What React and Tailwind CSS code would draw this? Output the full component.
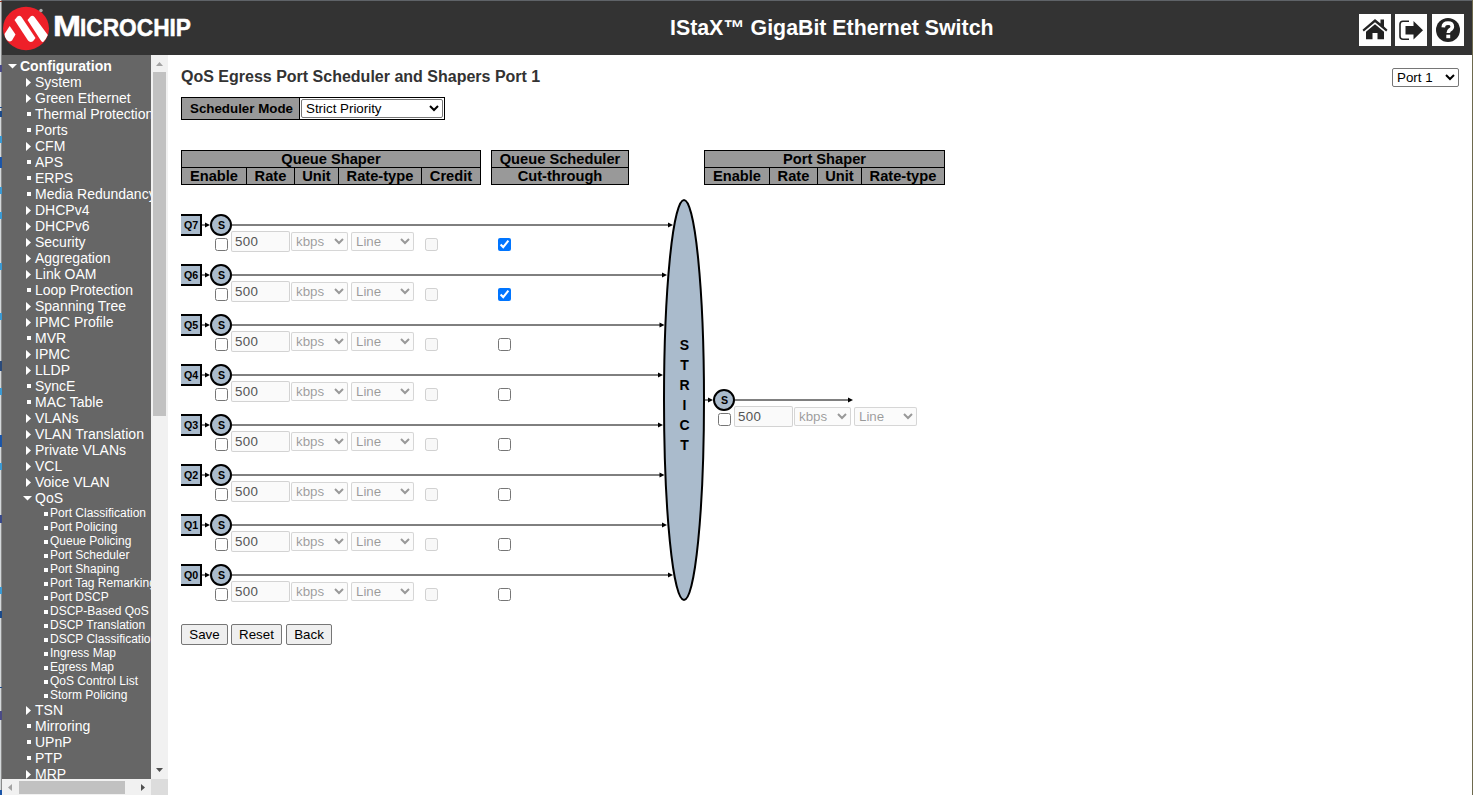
import React from "react";

const NAV = [
  ["r", "System"], ["r", "Green Ethernet"], ["s", "Thermal Protection"], ["s", "Ports"],
  ["r", "CFM"], ["s", "APS"], ["s", "ERPS"], ["s", "Media Redundancy"],
  ["r", "DHCPv4"], ["r", "DHCPv6"], ["r", "Security"], ["r", "Aggregation"],
  ["r", "Link OAM"], ["s", "Loop Protection"], ["r", "Spanning Tree"], ["r", "IPMC Profile"],
  ["s", "MVR"], ["r", "IPMC"], ["r", "LLDP"], ["s", "SyncE"], ["s", "MAC Table"],
  ["r", "VLANs"], ["r", "VLAN Translation"], ["r", "Private VLANs"], ["r", "VCL"],
  ["r", "Voice VLAN"], ["d", "QoS"],
];
const QOS = [
  "Port Classification", "Port Policing", "Queue Policing", "Port Scheduler", "Port Shaping",
  "Port Tag Remarking", "Port DSCP", "DSCP-Based QoS", "DSCP Translation",
  "DSCP Classification", "Ingress Map", "Egress Map", "QoS Control List", "Storm Policing",
];
const NAV_END = [["r", "TSN"], ["s", "Mirroring"], ["s", "UPnP"], ["s", "PTP"], ["r", "MRP"]];

function Marker({ kind }) {
  return (
    <svg width="15" height="16" className="shrink-0" fill="#fff">
      {kind === "r" && <path d="M6 4L11 8.5L6 13Z" />}
      {kind === "d" && <path d="M3 6H12L7.5 10.5Z" />}
      {kind === "s" && <rect x="7" y="6" width="4" height="4" />}
    </svg>
  );
}

function NavItem({ kind, label }) {
  return (
    <div className="flex h-4 items-center whitespace-nowrap pl-[18px] text-[14px] leading-4">
      <Marker kind={kind} />
      <span>{label}</span>
    </div>
  );
}

function Sidebar() {
  return (
    <aside className="flex h-[740px] w-[166px] shrink-0 flex-col">
      <div className="flex h-[724px]">
        <nav className="h-full w-[149px] overflow-hidden bg-[#666] pt-[3px] text-white">
          <div className="flex h-4 items-center pl-[3px] text-[14px] font-bold leading-4">
            <Marker kind="d" />
            <span>Configuration</span>
          </div>
          {NAV.map(([k, l]) => <NavItem key={l} kind={k} label={l} />)}
          {QOS.map((l) => (
            <div key={l} className="flex h-[14px] items-center gap-[2px] whitespace-nowrap pl-[42px] text-[12px] leading-[14px]">
              <span className="mt-[2px] size-1 shrink-0 bg-white" />
              <span>{l}</span>
            </div>
          ))}
          {NAV_END.map(([k, l]) => <NavItem key={l} kind={k} label={l} />)}
        </nav>
        <div className="flex w-[17px] flex-col items-center bg-[#f1f1f1]">
          <svg width="17" height="17"><path d="M5 11H12L8.5 7Z" fill="#a3a3a3" /></svg>
          <div className="h-[344px] w-[13px] bg-[#c1c1c1]" />
          <svg width="17" height="17" className="mt-auto"><path d="M5 6H12L8.5 10Z" fill="#505050" /></svg>
        </div>
      </div>
      <div className="flex h-4">
        <div className="flex w-[149px] items-center bg-[#f1f1f1]">
          <svg width="17" height="16"><path d="M10 5V12L6 8.5Z" fill="#a3a3a3" /></svg>
          <div className="h-[13px] w-[106px] bg-[#c1c1c1]" />
          <svg width="17" height="16" className="ml-auto"><path d="M7 5V12L11 8.5Z" fill="#505050" /></svg>
        </div>
        <div className="w-[17px] bg-[#dcdcdc]" />
      </div>
    </aside>
  );
}

function Logo() {
  return (
    <svg width="200" height="54" viewBox="2 1 200 54">
      <ellipse cx="26" cy="28.5" rx="23" ry="21.7" fill="#ee2029" />
      <path d="M14.500 20L17.500 16.500Q19.500 15 21.500 17L35.500 38L33 41.300Q30 43 28 40.500Z" fill="#fff" />
      <path d="M27.500 20L30.500 16.500Q32.500 15 34.500 17L47.800 35Q46 39.500 43 42.300Q41.500 42 40.500 40Z" fill="#fff" />
      <path d="M9.700 26L15.500 34.500L12 40.500Q9 43 6.500 39.500Q4.500 36.500 4.500 34Z" fill="#fff" />
      <circle cx="41" cy="10.500" r="1.700" fill="#aaa" />
      <g fill="#fff" stroke="#fff" strokeWidth="0.5" strokeLinejoin="round" fontFamily="Liberation Sans, Arial, sans-serif" fontWeight="700">
        <text x="53" y="36" fontSize="30" textLength="28" lengthAdjust="spacingAndGlyphs">M</text>
        <text x="80" y="36" fontSize="24" textLength="111" lengthAdjust="spacingAndGlyphs">ICROCHIP</text>
      </g>
    </svg>
  );
}

function HeaderIcons() {
  return (
    <div className="flex">
      <svg width="32" height="32" className="bg-white" fill="#222">
        <path d="M16 5L21.500 9.500V5.500H25V12.500L28.500 15.800L27.200 17.500L16 8.200L4.800 17.500L3.500 15.800Z" />
        <path d="M16 10.300L25 17.800V25.300H18.500V19H13.500V25.300H7V17.800Z" />
      </svg>
      <svg width="32" height="32" className="ml-1 bg-white">
        <path d="M14 7.300H8Q5 7.300 5 10.300V22.300Q5 25.300 8 25.300H14" fill="none" stroke="#222" strokeWidth="1.600" />
        <path d="M10.500 12H18.500V7L28 16.300L18.500 25.500V20.500H10.500Z" fill="#222" />
      </svg>
      <svg width="32" height="32" className="ml-[5px] bg-white">
        <circle cx="16" cy="16" r="12" fill="#222" />
        <path d="M11.300 13.300Q11.500 9.200 16 9.200Q20.300 9.200 20.300 12.500Q20.300 14.500 18 15.800Q16.300 17 16.300 19" fill="none" stroke="#fff" strokeWidth="3.700" />
        <rect x="14.300" y="20.700" width="3.900" height="3.500" fill="#fff" />
      </svg>
    </div>
  );
}

const TH = "border border-black bg-[#999] p-0 text-center font-bold";

function HeadTable({ title, cols, widths }) {
  return (
    <table className="table-fixed border-collapse text-[14.667px] leading-4 text-black">
      <colgroup>{widths.map((w, i) => <col key={i} style={{ width: w }} />)}</colgroup>
      <tbody>
        <tr className="h-[17px]"><th className={TH} colSpan={cols.length}>{title}</th></tr>
        <tr className="h-[17px]">{cols.map((c) => <th key={c} className={TH}>{c}</th>)}</tr>
      </tbody>
    </table>
  );
}

const DISABLED_SELECT = "h-[19px] rounded-[2px] border border-[#767676]/40 bg-[#efefef]/30 text-[#101010]/60 opacity-70";

function RateControls() {
  return (
    <div className="flex items-start">
      <input type="checkbox" className="mt-[7px] size-[13px]" />
      <input disabled defaultValue="500" className="ml-[3px] h-[21px] w-[59px] rounded-[2px] border border-[#767676]/30 bg-[#efefef]/30 px-[3px] tracking-[0.3px] text-[#545454]" />
      <select disabled className={"ml-[1px] mt-[1px] w-[57px] " + DISABLED_SELECT}><option>kbps</option></select>
      <select disabled className={"ml-[3px] mt-[1px] w-[63px] " + DISABLED_SELECT}><option>Line</option></select>
    </div>
  );
}

const QUEUES = [7, 6, 5, 4, 3, 2, 1, 0];
const TIPS = [673, 667, 664.5, 663, 663, 664.5, 667, 673];

function Arrow({ x1, x2, y }) {
  return (
    <g>
      <line x1={x1} x2={x2 - 3} y1={y} y2={y} stroke="#000" strokeWidth="1" />
      <path d={`M${x2 - 5} ${y - 2.5}L${x2} ${y}L${x2 - 5} ${y + 2.5}Z`} />
    </g>
  );
}

function Diagram() {
  return (
    <svg className="pointer-events-none absolute left-0 top-0" width="700" height="410" viewBox="181 195 700 410" fontFamily="Liberation Sans, Arial, sans-serif" fontWeight="700" textAnchor="middle">
      {QUEUES.map((q, i) => {
        const y = 225 + i * 50;
        return (
          <g key={q}>
            <rect x="171" y={y - 10} width="30" height="20" fill="#abc" stroke="#000" strokeWidth="2" />
            <text x="191" y={y + 4} fontSize="10.667">{"Q" + q}</text>
            <Arrow x1={202} x2={210} y={y} />
            <circle cx="221" cy={y} r="10" fill="#abc" stroke="#000" strokeWidth="2" />
            <text x="221.500" y={y + 4} fontSize="10.667">S</text>
            <Arrow x1={232} x2={TIPS[i]} y={y} />
          </g>
        );
      })}
      <ellipse cx="684" cy="400" rx="20" ry="200" fill="#abc" stroke="#000" strokeWidth="2" />
      {"STRICT".split("").map((c, i) => <text key={i} x="684.500" y={350 + i * 20} fontSize="14">{c}</text>)}
      <Arrow x1={705} x2={713} y={400} />
      <circle cx="724" cy="400" r="10" fill="#abc" stroke="#000" strokeWidth="2" />
      <text x="724.500" y="404" fontSize="10.667">S</text>
      <Arrow x1={735} x2={853} y={400} />
    </svg>
  );
}

const BTN = "h-[21px] rounded-[2px] border border-[#767676] bg-[#efefef] text-center text-black";

// Coloured specks of the window behind, along the left edge: [top, height, colour]
const EDGE = [
  [1, 1, "#8b2c1a"], [65, 7, "#4a4a86"], [107, 1, "#1b4a8a"], [111, 6, "#1b4a8a"], [136, 7, "#3a9ad4"],
  [157, 11, "#1b55a8"], [187, 7, "#3a9ad4"], [212, 7, "#3a9ad4"], [263, 7, "#3a9ad4"], [313, 7, "#3a9ad4"],
  [361, 10, "#2a4a7a"], [388, 7, "#3a9ad4"], [435, 12, "#1b55a8"], [463, 7, "#3a9ad4"], [515, 8, "#3a4a8a"],
  [587, 7, "#3a9ad4"], [611, 7, "#1b4a8a"], [687, 1, "#1b4a8a"], [711, 9, "#4a4a86"], [790, 5, "#1b55a8"],
];

export default function App() {
  return (
    <div className="flex h-[795px] w-[1473px] overflow-hidden bg-white font-['Liberation_Sans',Arial,sans-serif] text-[13.333px] leading-4">
      <div className="relative w-[2px] border-r border-[#8a8a8a] bg-[#d4d8da]">
        {EDGE.map(([t, h, c]) => <i key={t} className="absolute left-0 w-[2px]" style={{ top: t, height: h, background: c }} />)}
      </div>
      <div className="flex w-[1470px] flex-col">
        <header className="flex h-[55px] shrink-0 items-center border-t border-[#5f6368] bg-[#333] pr-2">
          <Logo />
          <h1 className="ml-[468px] whitespace-nowrap text-[21.333px] font-bold text-white">IStaX™ GigaBit Ethernet Switch</h1>
          <div className="ml-auto pt-[3px]"><HeaderIcons /></div>
        </header>
        <div className="flex">
          <Sidebar />
          <main className="flex-1 pl-[13px] pr-[13px]">
            <div className="flex items-start justify-between pt-[13px]">
              <h2 className="pt-px text-[16px] font-bold leading-4 text-[#333]">QoS Egress Port Scheduler and Shapers Port 1</h2>
              <select className="h-[19px] w-[67px] rounded-[2px] border border-[#767676] bg-white text-black"><option>Port 1</option></select>
            </div>
            <div className="mt-[10px] flex h-[23px] w-[264px] border border-black">
              <div className="flex w-[118px] items-center justify-center border-r border-black bg-[#999] pl-[2px] font-bold text-black">Scheduler Mode</div>
              <select className="ml-[1px] mt-[1px] h-[19px] w-[142px] rounded-[2px] border border-[#767676] bg-white text-black"><option>Strict Priority</option></select>
            </div>
            <div className="mt-[30px] flex">
              <HeadTable title="Queue Shaper" cols={["Enable", "Rate", "Unit", "Rate-type", "Credit"]} widths={[65, 48, 44, 83, 59]} />
              <div className="ml-[10px]"><HeadTable title="Queue Scheduler" cols={["Cut-through"]} widths={[137]} /></div>
              <div className="ml-[75px]"><HeadTable title="Port Shaper" cols={["Enable", "Rate", "Unit", "Rate-type"]} widths={[65, 48, 44, 83]} /></div>
            </div>
            <div className="relative mt-[10px] flex h-[410px]">
              <Diagram />
              <div className="w-[503px] pl-[34px] pt-[36px]">
                {QUEUES.map((q) => (
                  <div key={q} className="flex h-[50px] items-start">
                    <RateControls />
                    <input type="checkbox" disabled className="ml-[11px] mt-[7px] size-[13px]" />
                    <input type="checkbox" defaultChecked={q > 5} className="ml-[60px] mt-[7px] size-[13px]" />
                  </div>
                ))}
              </div>
              <div className="pl-[34px] pt-[211px]"><RateControls /></div>
            </div>
            <div className="mt-[19px] flex">
              <button className={"w-[47px] " + BTN}>Save</button>
              <button className={"ml-[3px] w-[51px] " + BTN}>Reset</button>
              <button className={"ml-1 w-[46px] " + BTN}>Back</button>
            </div>
          </main>
        </div>
      </div>
      <div className="w-px bg-[#6e6a4e]" />
    </div>
  );
}
